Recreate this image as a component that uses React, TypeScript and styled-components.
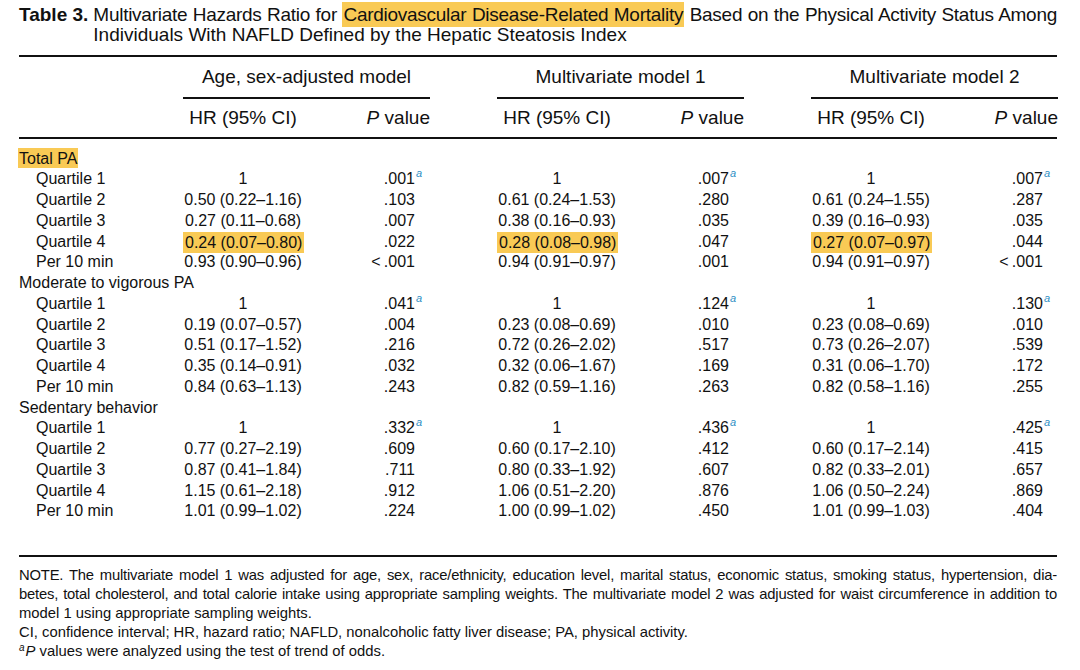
import React from "react";
import styled, { createGlobalStyle } from "styled-components";

const GlobalStyle = createGlobalStyle`
  html, body { margin: 0; padding: 0; background: #ffffff; }
  body {
    font-family: "Liberation Sans", Arial, Helvetica, sans-serif;
    color: #111111;
  }
`;

const HL = "#F9CA55";

const Page = styled.div`
  width: 1080px;
  height: 670px;
  box-sizing: border-box;
  padding: 5px 23px 0 19px;
  overflow: hidden;
`;

const Caption = styled.div`
  display: flex;
  gap: 5px;
  font-size: 19px;
  line-height: 20px;
`;

const CaptionLabel = styled.span`
  flex: none;
  font-weight: 700;
`;

const CaptionText = styled.div`
  flex: 1;
  min-width: 0;
`;

const Line = styled.div<{ $justify?: boolean; $spacing?: number }>`
  text-align: ${(p) => (p.$justify ? "justify" : "left")};
  text-align-last: ${(p) => (p.$justify ? "justify" : "left")};
  letter-spacing: ${(p) => (p.$spacing ? `${p.$spacing}px` : "normal")};
  white-space: nowrap;
`;

const Mark = styled.span`
  background: ${HL};
  padding: 2px 1px;
`;

const Table = styled.div`
  margin-top: 10px;
  border-top: 2px solid #111;
  border-bottom: 2px solid #111;
`;

const GridRow = styled.div`
  display: grid;
  grid-template-columns: 97px repeat(3, 247px);
  column-gap: 67px;
`;

const GroupHeadRow = styled(GridRow)`
  height: 42px;
`;

const GroupTitle = styled.div`
  box-sizing: border-box;
  border-bottom: 2px solid #111;
  display: flex;
  align-items: center;
  justify-content: center;
  font-size: 19px;
`;

const SubHeadRow = styled(GridRow)`
  box-sizing: border-box;
  height: 40px;
  border-bottom: 2px solid #111;
  align-items: center;
  font-size: 19px;
`;

const Pair = styled.div`
  display: grid;
  grid-template-columns: 120px 1fr;
  align-items: center;
`;

const HrCell = styled.div`
  text-align: center;
  white-space: nowrap;
`;

const PHead = styled.div`
  text-align: right;
  white-space: nowrap;
`;

const PCell = styled.div`
  text-align: right;
  padding-right: 15px;
  white-space: nowrap;
`;

const Body = styled.div`
  padding: 9.5px 0 32.5px;
  font-size: 16px;
`;

const DataRow = styled(GridRow)`
  height: 20.75px;
  line-height: 20.75px;
  align-items: center;
`;

const SectionLabel = styled.div`
  grid-column: 1 / -1;
  white-space: nowrap;
`;

const ItemLabel = styled.div`
  padding-left: 17px;
  white-space: nowrap;
`;

const SectionMark = styled.span`
  background: ${HL};
  padding: 2px 1px 1px;
  margin-left: -1px;
`;

const ValueMark = styled.span`
  display: inline-block;
  background: ${HL};
  line-height: 21px;
  padding: 0 2px;
`;

const PNum = styled.span`
  position: relative;
`;

const Sup = styled.span<{ $blue?: boolean }>`
  font-style: italic;
  font-size: 11px;
  line-height: 1;
  color: ${(p) => (p.$blue ? "#2f8fc4" : "#111")};
`;

const TableSup = styled(Sup)`
  position: absolute;
  left: 100%;
  top: -2px;
  margin-left: 1px;
`;

const Notes = styled.div`
  margin-top: 9px;
  font-size: 14.8px;
  line-height: 19px;
`;

const NoteSup = styled(Sup)`
  font-size: 10px;
  vertical-align: 5px;
  margin-right: 1px;
`;

type Cell = { hr: string; p: string; trend?: boolean; mark?: boolean };
type Row = { label: string; cells: Cell[] };
type Section = { label: string; mark?: boolean; rows: Row[] };

const c = (hr: string, p: string, extra: Partial<Cell> = {}): Cell => ({
  hr,
  p,
  ...extra,
});

const LT = "<\u2009";

const sections: Section[] = [
  {
    label: "Total PA",
    mark: true,
    rows: [
      { label: "Quartile 1", cells: [c("1", ".001", { trend: true }), c("1", ".007", { trend: true }), c("1", ".007", { trend: true })] },
      { label: "Quartile 2", cells: [c("0.50 (0.22–1.16)", ".103"), c("0.61 (0.24–1.53)", ".280"), c("0.61 (0.24–1.55)", ".287")] },
      { label: "Quartile 3", cells: [c("0.27 (0.11–0.68)", ".007"), c("0.38 (0.16–0.93)", ".035"), c("0.39 (0.16–0.93)", ".035")] },
      {
        label: "Quartile 4",
        cells: [
          c("0.24 (0.07–0.80)", ".022", { mark: true }),
          c("0.28 (0.08–0.98)", ".047", { mark: true }),
          c("0.27 (0.07–0.97)", ".044", { mark: true }),
        ],
      },
      { label: "Per 10 min", cells: [c("0.93 (0.90–0.96)", LT + ".001"), c("0.94 (0.91–0.97)", ".001"), c("0.94 (0.91–0.97)", LT + ".001")] },
    ],
  },
  {
    label: "Moderate to vigorous PA",
    rows: [
      { label: "Quartile 1", cells: [c("1", ".041", { trend: true }), c("1", ".124", { trend: true }), c("1", ".130", { trend: true })] },
      { label: "Quartile 2", cells: [c("0.19 (0.07–0.57)", ".004"), c("0.23 (0.08–0.69)", ".010"), c("0.23 (0.08–0.69)", ".010")] },
      { label: "Quartile 3", cells: [c("0.51 (0.17–1.52)", ".216"), c("0.72 (0.26–2.02)", ".517"), c("0.73 (0.26–2.07)", ".539")] },
      { label: "Quartile 4", cells: [c("0.35 (0.14–0.91)", ".032"), c("0.32 (0.06–1.67)", ".169"), c("0.31 (0.06–1.70)", ".172")] },
      { label: "Per 10 min", cells: [c("0.84 (0.63–1.13)", ".243"), c("0.82 (0.59–1.16)", ".263"), c("0.82 (0.58–1.16)", ".255")] },
    ],
  },
  {
    label: "Sedentary behavior",
    rows: [
      { label: "Quartile 1", cells: [c("1", ".332", { trend: true }), c("1", ".436", { trend: true }), c("1", ".425", { trend: true })] },
      { label: "Quartile 2", cells: [c("0.77 (0.27–2.19)", ".609"), c("0.60 (0.17–2.10)", ".412"), c("0.60 (0.17–2.14)", ".415")] },
      { label: "Quartile 3", cells: [c("0.87 (0.41–1.84)", ".711"), c("0.80 (0.33–1.92)", ".607"), c("0.82 (0.33–2.01)", ".657")] },
      { label: "Quartile 4", cells: [c("1.15 (0.61–2.18)", ".912"), c("1.06 (0.51–2.20)", ".876"), c("1.06 (0.50–2.24)", ".869")] },
      { label: "Per 10 min", cells: [c("1.01 (0.99–1.02)", ".224"), c("1.00 (0.99–1.02)", ".450"), c("1.01 (0.99–1.03)", ".404")] },
    ],
  },
];

const groups = ["Age, sex-adjusted model", "Multivariate model 1", "Multivariate model 2"];

export default function App() {
  return (
    <>
      <GlobalStyle />
      <Page>
        <Caption>
          <CaptionLabel>Table 3.</CaptionLabel>
          <CaptionText>
            <Line $justify $spacing={-0.27}>
              Multivariate Hazards Ratio for <Mark>Cardiovascular Disease-Related Mortality</Mark> Based on the
              Physical Activity Status Among
            </Line>
            <Line>Individuals With NAFLD Defined by the Hepatic Steatosis Index</Line>
          </CaptionText>
        </Caption>

        <Table>
          <GroupHeadRow>
            <div />
            {groups.map((g) => (
              <GroupTitle key={g}>{g}</GroupTitle>
            ))}
          </GroupHeadRow>
          <SubHeadRow>
            <div />
            {groups.map((g) => (
              <Pair key={g}>
                <HrCell>HR (95% CI)</HrCell>
                <PHead>
                  <i>P</i> value
                </PHead>
              </Pair>
            ))}
          </SubHeadRow>
          <Body>
            {sections.map((s) => (
              <React.Fragment key={s.label}>
                <DataRow>
                  <SectionLabel>{s.mark ? <SectionMark>{s.label}</SectionMark> : s.label}</SectionLabel>
                </DataRow>
                {s.rows.map((r) => (
                  <DataRow key={s.label + r.label}>
                    <ItemLabel>{r.label}</ItemLabel>
                    {r.cells.map((cell, i) => (
                      <Pair key={i}>
                        <HrCell>{cell.mark ? <ValueMark>{cell.hr}</ValueMark> : cell.hr}</HrCell>
                        <PCell>
                          <PNum>
                            {cell.p}
                            {cell.trend && <TableSup $blue>a</TableSup>}
                          </PNum>
                        </PCell>
                      </Pair>
                    ))}
                  </DataRow>
                ))}
              </React.Fragment>
            ))}
          </Body>
        </Table>

        <Notes>
          <Line $justify $spacing={-0.2}>
            NOTE. The multivariate model 1 was adjusted for age, sex, race/ethnicity, education level, marital status,
            economic status, smoking status, hypertension, dia-
          </Line>
          <Line $justify $spacing={-0.2}>
            betes, total cholesterol, and total calorie intake using appropriate sampling weights. The multivariate model
            2 was adjusted for waist circumference in addition to
          </Line>
          <Line>model 1 using appropriate sampling weights.</Line>
          <Line>CI, confidence interval; HR, hazard ratio; NAFLD, nonalcoholic fatty liver disease; PA, physical activity.</Line>
          <Line>
            <NoteSup>a</NoteSup>
            <i>P</i> values were analyzed using the test of trend of odds.
          </Line>
        </Notes>
      </Page>
    </>
  );
}
